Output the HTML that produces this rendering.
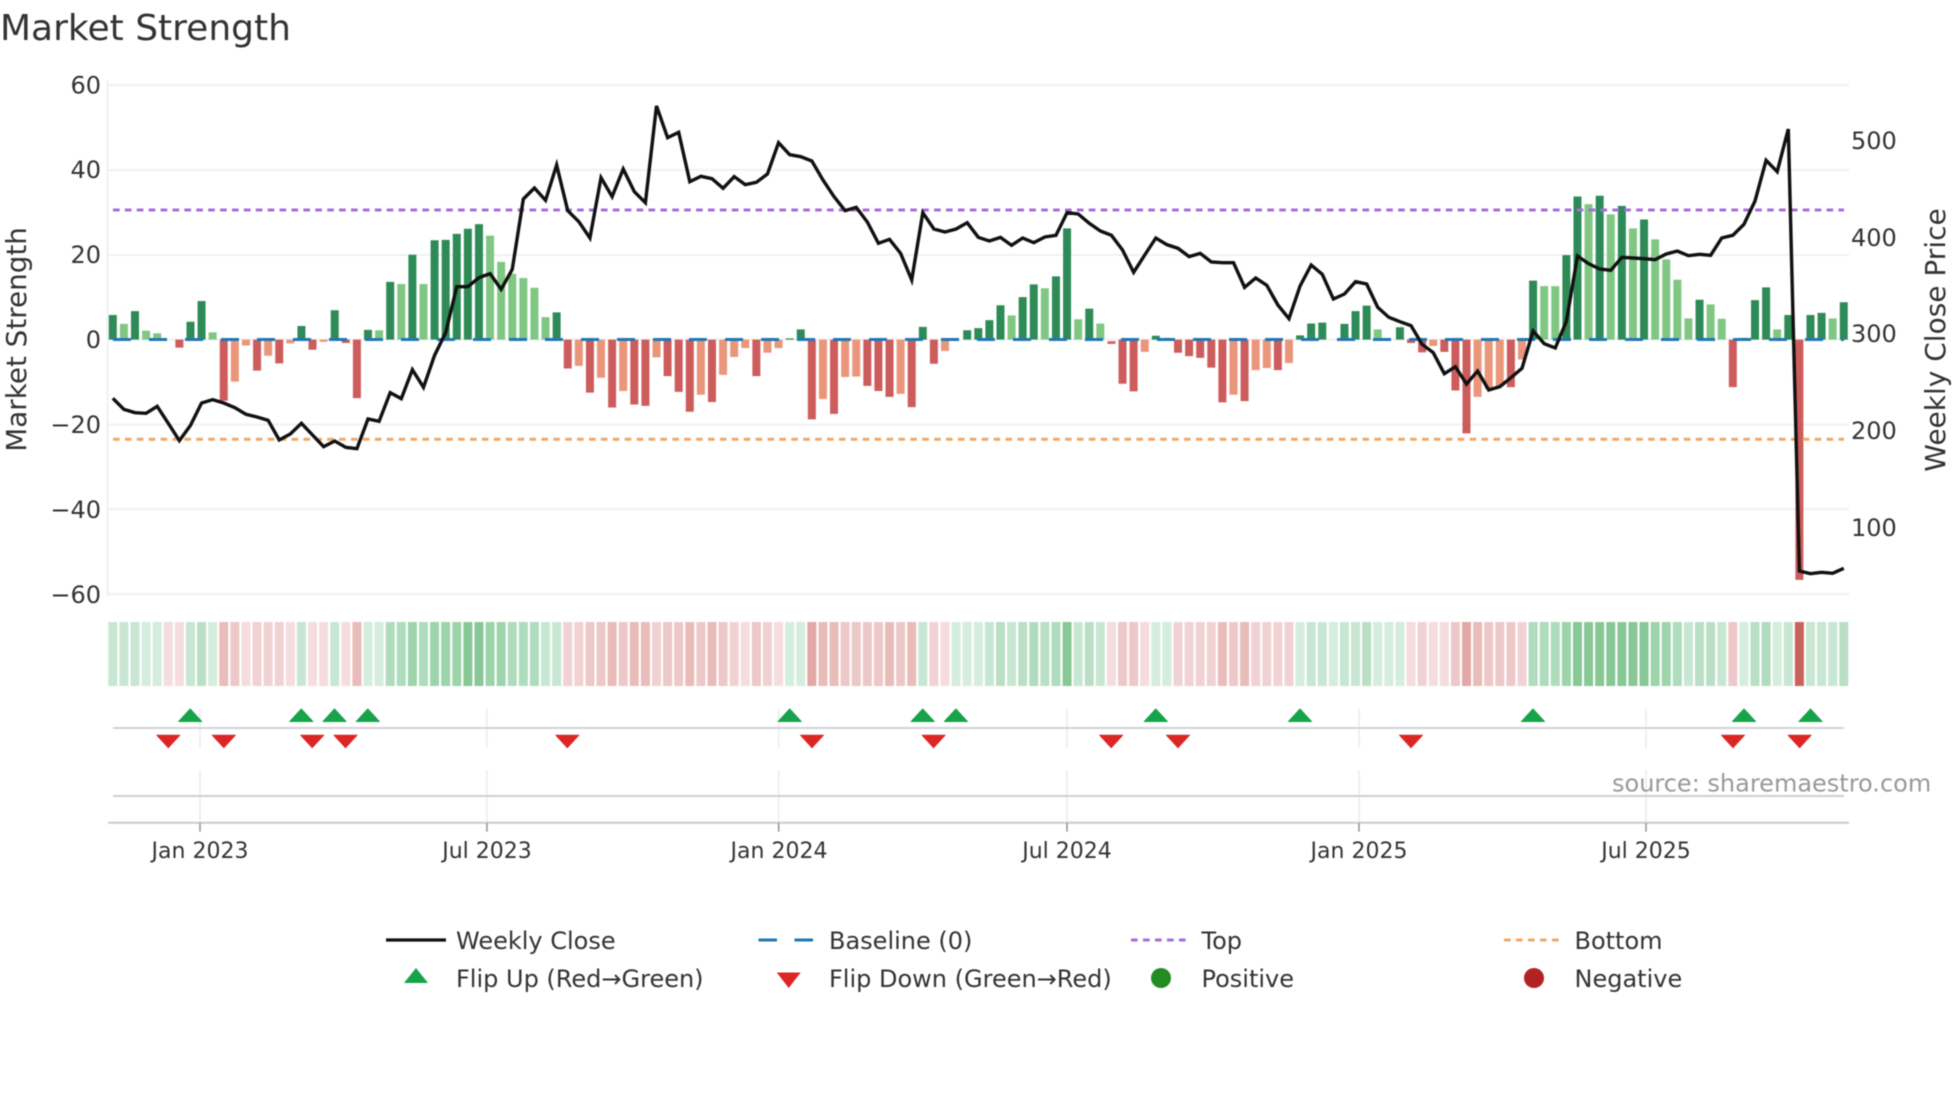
<!DOCTYPE html>
<html><head><meta charset="utf-8"><title>Market Strength</title>
<style>
html,body{margin:0;padding:0;background:#fff;width:1960px;height:1102px;overflow:hidden}
svg{display:block;filter:blur(.5px)}
text{font-family:"DejaVu Sans","Liberation Sans",sans-serif;fill:#333}
.t{font-size:24px}
.x{font-size:22px;text-anchor:middle}
.l{font-size:24px;text-anchor:end}
.a{font-size:28px;text-anchor:middle}
</style></head><body>
<svg width="1960" height="1102" viewBox="0 0 1960 1102" xmlns="http://www.w3.org/2000/svg">
<rect width="1960" height="1102" fill="#fff"/>
<text x="0" y="40" style="font-size:36px" fill="#333">Market Strength</text>

<!-- grid -->
<path d="M108 85H1849M108 170H1849M108 255H1849M108 339.5H1849M108 424.5H1849M108 509H1849M108 594H1849M107.5 80V597" stroke="#eff1f3" stroke-width="2" fill="none"/>

<!-- y ticks -->
<text class="l" x="101" y="93.5">60</text>
<text class="l" x="101" y="178">40</text>
<text class="l" x="101" y="263">20</text>
<text class="l" x="101" y="348">0</text>
<text class="l" x="101" y="433">−20</text>
<text class="l" x="101" y="518">−40</text>
<text class="l" x="101" y="603">−60</text>
<text class="t" x="1851" y="149">500</text>
<text class="t" x="1851" y="246">400</text>
<text class="t" x="1851" y="342">300</text>
<text class="t" x="1851" y="439">200</text>
<text class="t" x="1851" y="536">100</text>
<text class="a" transform="translate(26,339.4) rotate(-90)" style="font-size:27.8px">Market Strength</text>
<text class="a" transform="translate(1945,340) rotate(-90)">Weekly Close Price</text>

<!-- bars -->
<g transform="translate(112.8,339.6) scale(11.096,-4.245)" fill="none" stroke-width=".72">
<path stroke="#2e8b57" d="M0 0V5.8M2 0V6.7M7 0V4.2M8 0V9.1M17 0V3.2M20 0V6.9M23 0V2.3M25 0V13.6M27 0V20M29 0V23.4M30 0V23.5M31 0V24.9M32 0V26.1M33 0V27.2M40 0V6.4M61 0V.3M62 0V2.4M73 0V3M77 0V2.2M78 0V2.7M79 0V4.6M80 0V8.1M82 0V10M83 0V13M85 0V14.9M86 0V26.2M88 0V7.3M94 0V.9M95 0V.4M107 0V1M108 0V3.8M109 0V4M111 0V3.7M112 0V6.7M113 0V8M116 0V2.9M128 0V13.9M131 0V19.9M132 0V33.7M134 0V33.9M136 0V31.5M138 0V28.3M143 0V9.4M147 0V.4M148 0V9.3M149 0V12.3M151 0V5.8M153 0V5.8M154 0V6.3M156 0V8.8"/>
<path stroke="#81c784" d="M1 0V3.7M3 0V2.1M4 0V1.5M9 0V1.7M24 0V2.2M26 0V13.1M28 0V13.1M34 0V24.5M35 0V18.3M36 0V15.5M37 0V14.5M38 0V12.2M39 0V5.3M81 0V5.7M84 0V12.1M87 0V4.8M89 0V3.8M114 0V2.4M129 0V12.6M130 0V12.6M133 0V31.9M135 0V29.5M137 0V26.2M139 0V23.6M140 0V18.9M141 0V14.1M142 0V5M144 0V8.3M145 0V4.9M150 0V2.4M155 0V5"/>
<path stroke="#cd5c5c" d="M6 0V-1.9M10 0V-14.4M13 0V-7.3M15 0V-5.6M18 0V-2.4M21 0V-.8M22 0V-13.8M41 0V-6.8M43 0V-12.5M45 0V-16M47 0V-15.3M48 0V-15.6M50 0V-8.6M51 0V-12.3M52 0V-17M54 0V-14.7M58 0V-8.6M63 0V-18.8M65 0V-17.5M68 0V-10.9M69 0V-12.1M70 0V-13.5M72 0V-15.9M74 0V-5.7M90 -.4V-1M91 0V-10.4M92 0V-12.2M96 0V-3.1M97 0V-3.9M98 0V-4.3M99 0V-6.6M100 0V-14.8M102 0V-14.5M105 0V-7.2M117 0V-.8M118 0V-3M120 0V-2.9M121 0V-12M122 0V-22.1M126 0V-11.2M146 0V-11.2M152 0V-56.6"/>
<path stroke="#e9967a" d="M11 0V-9.9M12 0V-1.4M14 0V-3.8M16 0V-.9M19 0V-.5M42 0V-6.2M44 0V-9M46 0V-12.1M49 0V-4.2M53 0V-13M55 0V-8.3M56 0V-4.1M57 0V-2M59 0V-3.1M60 0V-2M64 0V-14M66 0V-8.8M67 0V-8.7M71 0V-12.8M75 0V-2.7M93 0V-2.9M101 0V-13M103 0V-7.2M104 0V-6.7M106 0V-5.5M119 0V-1.5M123 0V-13.5M124 0V-11.6M125 0V-11M127 0V-4.7"/>
</g>

<!-- reference lines -->
<path d="M113 339.5H1844" stroke="#1f77b4" stroke-width="3" stroke-dasharray="18 18" fill="none"/>
<path d="M113 210H1844" stroke="#a66cdc" stroke-width="3" stroke-dasharray="6.6 5.3" fill="none"/>
<path d="M113 439.3H1844" stroke="#f0a868" stroke-width="3" stroke-dasharray="6.6 5.3" fill="none"/>

<!-- weekly close -->
<g transform="translate(112.8,0) scale(11.096,.33333)">
<polyline fill="none" stroke="#111" stroke-width="3.4" stroke-linejoin="miter" vector-effect="non-scaling-stroke" points="0,1195 1,1228 2,1238 3,1240 4,1219 5,1270 6,1322 7,1276 8,1209 9,1199 10,1209 11,1223 12,1243 13,1251 14,1261 15,1320 16,1302 17,1270 18,1305 19,1340 20,1323 21,1342 22,1346 23,1257 24,1264 25,1178 26,1196 27,1109 28,1162 29,1066 30,998 31,860 32,860 33,833 34,821 35,868 36,808 37,597 38,564 39,601 40,495 41,632 42,665 43,714 44,533 45,590 46,507 47,575 48,608 49,318 50,413 51,397 52,545 53,529 54,536 55,565 56,530 57,554 58,547 59,522 60,428 61,464 62,470 63,483 64,540 65,590 66,632 67,622 68,666 69,730 70,718 71,760 72,840 73,638 74,687 75,696 76,687 77,668 78,712 79,723 80,712 81,736 82,714 83,728 84,711 85,706 86,638 87,642 88,670 89,693 90,706 91,750 92,817 93,765 94,714 95,734 96,745 97,770 98,760 99,786 100,788 101,788 102,862 103,834 104,856 105,915 106,956 107,858 108,795 109,823 110,897 111,882 112,845 113,852 114,922 115,952 116,965 117,977 118,1033 119,1058 120,1121 121,1100 122,1152 123,1113 124,1170 125,1160 126,1133 127,1105 128,993 129,1031 130,1044 131,964 132,768 133,791 134,807 135,811 136,772 137,774 138,776 139,779 140,762 141,753 142,767 143,763 144,766 145,714 146,706 147,673 148,603 149,481 150,515 151,387 152,1713 153,1721 154,1717 155,1720 156,1705"/>
</g>

<!-- strip -->
<g transform="translate(112.8,622) scale(11.096,64)" fill="none" stroke-width=".81">
<path stroke="#d5eddd" d="M3 0V1M4 0V1M9 0V1M23 0V1M24 0V1M61 0V1M62 0V1M76 0V1M77 0V1M78 0V1M94 0V1M95 0V1M107 0V1M110 0V1M114 0V1M115 0V1M116 0V1M147 0V1M150 0V1"/>
<path stroke="#c8e7d2" d="M0 0V1M1 0V1M2 0V1M7 0V1M17 0V1M20 0V1M39 0V1M40 0V1M73 0V1M79 0V1M81 0V1M87 0V1M89 0V1M108 0V1M109 0V1M111 0V1M112 0V1M142 0V1M145 0V1M151 0V1M153 0V1M154 0V1M155 0V1"/>
<path stroke="#badfc5" d="M8 0V1M80 0V1M82 0V1M84 0V1M88 0V1M113 0V1M143 0V1M144 0V1M148 0V1M156 0V1"/>
<path stroke="#aedcbc" d="M25 0V1M26 0V1M28 0V1M36 0V1M37 0V1M38 0V1M83 0V1M85 0V1M128 0V1M129 0V1M130 0V1M141 0V1M149 0V1"/>
<path stroke="#9dd4ab" d="M27 0V1M29 0V1M30 0V1M31 0V1M34 0V1M35 0V1M131 0V1M139 0V1M140 0V1"/>
<path stroke="#88c897" d="M32 0V1M33 0V1M86 0V1M132 0V1M133 0V1M134 0V1M135 0V1M136 0V1M137 0V1M138 0V1"/>
<path stroke="#f5dcde" d="M5 0V1M6 0V1M12 0V1M16 0V1M18 0V1M19 0V1M21 0V1M57 0V1M60 0V1M75 0V1M90 0V1M93 0V1M117 0V1M119 0V1M120 0V1"/>
<path stroke="#f1d2d3" d="M13 0V1M14 0V1M15 0V1M41 0V1M42 0V1M49 0V1M56 0V1M59 0V1M74 0V1M96 0V1M97 0V1M98 0V1M99 0V1M103 0V1M104 0V1M105 0V1M106 0V1M118 0V1M127 0V1"/>
<path stroke="#edc8c8" d="M11 0V1M43 0V1M44 0V1M46 0V1M50 0V1M51 0V1M53 0V1M55 0V1M58 0V1M66 0V1M67 0V1M68 0V1M69 0V1M71 0V1M91 0V1M92 0V1M101 0V1M121 0V1M124 0V1M125 0V1M126 0V1M146 0V1"/>
<path stroke="#e9bcb9" d="M10 0V1M22 0V1M45 0V1M47 0V1M48 0V1M52 0V1M54 0V1M64 0V1M65 0V1M70 0V1M72 0V1M100 0V1M102 0V1M123 0V1"/>
<path stroke="#e3a8a5" d="M63 0V1M122 0V1"/>
<path stroke="#c8625b" d="M152 0V1"/>
</g>

<!-- lower panels -->
<path d="M200 708.7V747.7M486.9 708.7V747.7M778.7 708.7V747.7M1067 708.7V747.7M1359 708.7V747.7M1646 708.7V747.7M200 770V823M486.9 770V823M778.7 770V823M1067 770V823M1359 770V823M1646 770V823" stroke="#e9ebee" stroke-width="1.5" fill="none"/>
<path d="M113 728H1844" stroke="#d2d3d8" stroke-width="2" fill="none"/>
<path d="M113 796H1844" stroke="#cfcfcf" stroke-width="2" fill="none"/>
<path d="M108 822.8H1849" stroke="#cbcbcb" stroke-width="2" fill="none"/>
<path d="M200 823V831.7M486.9 823V831.7M778.7 823V831.7M1067 823V831.7M1359 823V831.7M1646 823V831.7" stroke="#999" stroke-width="1.6" fill="none"/>

<!-- flip markers -->
<path fill="#16a34a" stroke="#16a34a" stroke-width="1" stroke-linejoin="round" d="M178.7 721.5l11.5-12.5 11.5 12.5zM289.8 721.5l11.5-12.5 11.5 12.5zM323 721.5l11.5-12.5 11.5 12.5zM356.3 721.5l11.5-12.5 11.5 12.5zM778.2 721.5l11.5-12.5 11.5 12.5zM911.2 721.5l11.5-12.5 11.5 12.5zM944.4 721.5l11.5-12.5 11.5 12.5zM1144.3 721.5l11.5-12.5 11.5 12.5zM1288.5 721.5l11.5-12.5 11.5 12.5zM1521.5 721.5l11.5-12.5 11.5 12.5zM1732.5 721.5l11.5-12.5 11.5 12.5zM1799 721.5l11.5-12.5 11.5 12.5z"/>
<path fill="#dc2626" stroke="#dc2626" stroke-width="1" stroke-linejoin="round" d="M156.8 735.2l11.5 12.5 11.5-12.5zM212.3 735.2l11.5 12.5 11.5-12.5zM300.7 735.2l11.5 12.5 11.5-12.5zM334 735.2l11.5 12.5 11.5-12.5zM555.8 735.2l11.5 12.5 11.5-12.5zM800.5 735.2l11.5 12.5 11.5-12.5zM922.1 735.2l11.5 12.5 11.5-12.5zM1099.7 735.2l11.5 12.5 11.5-12.5zM1166.5 735.2l11.5 12.5 11.5-12.5zM1399.5 735.2l11.5 12.5 11.5-12.5zM1721.5 735.2l11.5 12.5 11.5-12.5zM1788.1 735.2l11.5 12.5 11.5-12.5z"/>

<text class="t" x="1612" y="791.5" style="fill:#999">source: sharemaestro.com</text>

<!-- x labels -->
<text class="x" x="200" y="858">Jan 2023</text>
<text class="x" x="487" y="858">Jul 2023</text>
<text class="x" x="779" y="858">Jan 2024</text>
<text class="x" x="1067" y="858">Jul 2024</text>
<text class="x" x="1359" y="858">Jan 2025</text>
<text class="x" x="1646" y="858">Jul 2025</text>

<!-- legend -->
<path d="M386 940H446" stroke="#111" stroke-width="3.2" fill="none"/>
<text class="t" x="456" y="949">Weekly Close</text>
<path d="M758.5 940H813" stroke="#1f77b4" stroke-width="3" stroke-dasharray="18.5 17.5" fill="none"/>
<text class="t" x="829" y="949">Baseline (0)</text>
<path d="M1131 940H1186" stroke="#a66cdc" stroke-width="3" stroke-dasharray="6.6 5.4" fill="none"/>
<text class="t" x="1201.5" y="949">Top</text>
<path d="M1504 940H1559" stroke="#f0a868" stroke-width="3" stroke-dasharray="6.6 5.4" fill="none"/>
<text class="t" x="1574.5" y="949">Bottom</text>
<path d="M404 983L416 968 428 983z" fill="#16a34a"/>
<text class="t" x="456" y="987">Flip Up (Red→Green)</text>
<path d="M776.7 972.5L788.7 988 800.7 972.5z" fill="#dc2626"/>
<text class="t" x="829" y="987">Flip Down (Green→Red)</text>
<circle cx="1161" cy="978" r="10" fill="#228b22"/>
<text class="t" x="1201.5" y="987">Positive</text>
<circle cx="1534" cy="978" r="10" fill="#b22222"/>
<text class="t" x="1574.5" y="987">Negative</text>
</svg>
</body></html>
